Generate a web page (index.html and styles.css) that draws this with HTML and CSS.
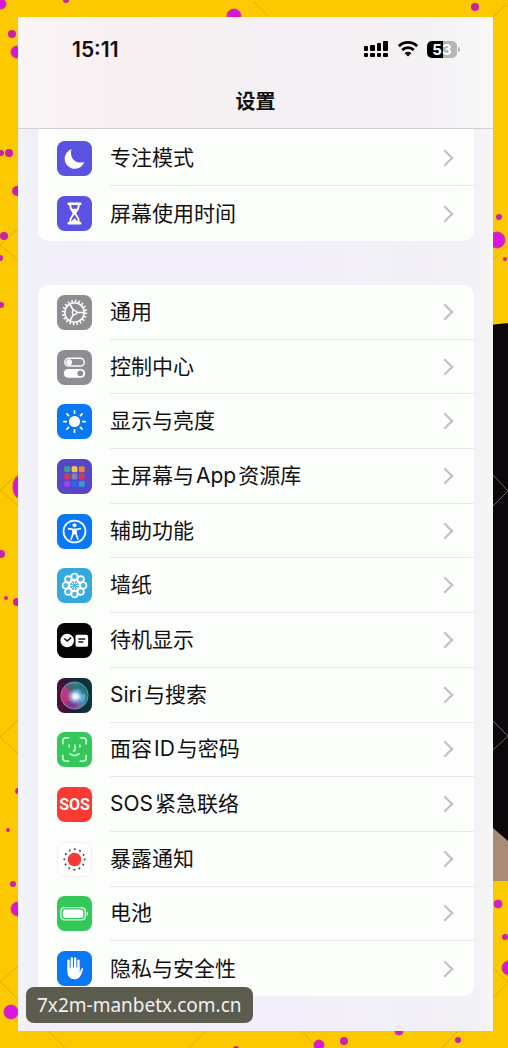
FILE: index.html
```html
<!DOCTYPE html>
<html lang="zh-CN">
<head>
    <meta charset="UTF-8">
    <meta name="viewport" content="width=device-width, initial-scale=1">
    <title>设置</title>
    <link rel="stylesheet" href="styles.css">
</head>
<body>

    <!-- paint splashes behind the phone -->
    <svg class="backdrop" viewBox="0 0 508 1048" preserveAspectRatio="none" aria-hidden="true">
        <g fill="none" stroke="#e0ae00">
            <path d="M0 245l18-16M0 245l18 15M0 490l18-16M0 490l18 16M0 737l18-17M0 737l18 17M0 982l18-16M0 982l18 17"/>
            <path d="M254 2l14 14M493 17l15-14M493 260l15-15M493 968l15 14-15 16M48 1031l17 17M206 1031l-17 17M302 1031l16 17M458 1031l-16 17"/>
        </g>
        <g fill="#d916dc" stroke="#c93a95">
            <circle cx="1" cy="4" r="5"/>
            <circle cx="17" cy="52" r="6"/>
            <circle cx="234" cy="16" r="7"/>
            <circle cx="497" cy="240" r="8"/>
            <ellipse cx="19" cy="487" rx="6" ry="11"/>
            <circle cx="18" cy="909" r="7"/>
            <circle cx="11" cy="1012" r="7"/>
            <circle cx="498" cy="904" r="4"/>
            <circle cx="509" cy="968" r="7"/>
            <circle cx="399" cy="1031" r="4"/>
            <circle cx="319" cy="1045" r="5"/>
        </g>
        <g fill="#c822a8">
            <circle cx="66" cy="0" r="3"/>
            <circle cx="12" cy="34" r="4"/>
            <circle cx="475" cy="7" r="4"/>
            <circle cx="1" cy="153" r="3"/>
            <circle cx="9" cy="153" r="4"/>
            <circle cx="17" cy="191" r="5"/>
            <circle cx="4" cy="236" r="4"/>
            <circle cx="0" cy="258" r="3"/>
            <circle cx="1" cy="305" r="3"/>
            <circle cx="1" cy="554" r="4"/>
            <circle cx="6" cy="598" r="2"/>
            <circle cx="17" cy="602" r="4"/>
            <circle cx="18" cy="791" r="3"/>
            <circle cx="8" cy="830" r="2"/>
            <circle cx="13" cy="884" r="3"/>
            <circle cx="499" cy="217" r="3"/>
            <circle cx="505" cy="259" r="2"/>
            <circle cx="505" cy="937" r="3"/>
            <circle cx="458" cy="1040" r="3"/>
            <circle cx="344" cy="1041" r="4"/>
            <circle cx="236" cy="1049" r="3"/>
        </g>
        <path d="M480 326l28-3v558h-28z" fill="#0c070b"/>
        <path d="M480 820l13 8 15 13v40h-28z" fill="#a98b76"/>
        <path d="M493 475l15 16-15 15M493 721l15 15-15 14" fill="none" stroke="#665f63"/>
    </svg>

    <main class="phone">
        <header class="top">
            <div class="status">
                <span class="time">15:11</span>
                <div class="status_icons">
                    <svg width="26" height="18" viewBox="0 0 26 18" aria-label="信号">
                        <rect x="1" y="6" width="4" height="5" rx="1"/>
                        <rect x="7" y="5" width="5" height="6" rx="1"/>
                        <rect x="14" y="3" width="4" height="8" rx="1"/>
                        <rect x="20" y="1" width="5" height="10" rx="1"/>
                        <rect x="1" y="13" width="4" height="4" rx="1"/>
                        <rect x="7" y="13" width="5" height="4" rx="1"/>
                        <rect x="14" y="13" width="4" height="4" rx="1"/>
                        <rect x="20" y="13" width="5" height="4" rx="1"/>
                    </svg>
                    <svg width="22" height="18" viewBox="0 0 22 18" aria-label="无线网络">
                        <path d="M1.800 6.200a13.200 13.200 0 0 1 18.400 0M5.200 10a8.300 8.300 0 0 1 11.600 0" fill="none" stroke="#000" stroke-width="2.700"/>
                        <path d="M11 16.500l-3.300-3.400a4.700 4.700 0 0 1 6.600 0z"/>
                    </svg>
                    <div class="battery"><span>5</span><span>3</span></div>
                </div>
            </div>
            <h1>设置</h1>
        </header>

        <nav class="list list_cut">
            <a class="row" href="#focus">
                <svg class="icon" viewBox="0 0 36 36">
                    <rect width="36" height="36" rx="8" fill="#5a52e0"/>
                    <path d="M15 8.500A10.300 10.300 0 1 0 28 21.500C20 24.500 12 17.500 15 8.500z" fill="#fff"/>
                </svg>
                <span class="label"><span>专注模式</span></span>
            </a>
            <a class="row" href="#screentime">
                <svg class="icon" viewBox="0 0 36 36">
                    <rect width="36" height="36" rx="8" fill="#5a52e0"/>
                    <path d="M12 8h12M12 28h12" stroke="#fff" stroke-width="2.500" stroke-linecap="round"/>
                    <path d="M13.500 9c0 5 2 6.500 4 9-2 2.500-4 4-4 9M22.500 9c0 5-2 6.500-4 9 2 2.500 4 4 4 9" fill="none" stroke="#fff" stroke-width="2"/>
                    <path d="M14.500 13h7L18 17.500zM14 27l4-4 4 4z" fill="#fff"/>
                </svg>
                <span class="label"><span>屏幕使用时间</span></span>
            </a>
        </nav>

        <nav class="list list_main">
            <a class="row" href="#general">
                <svg class="icon" viewBox="0 0 36 36">
                    <rect width="36" height="36" rx="8" fill="#8e8e92"/>
                    <g fill="none" stroke="#fff">
                        <circle cx="18" cy="18" r="11.800" stroke-width="2.400" stroke-dasharray="1.600 2.107"/>
                        <circle cx="18" cy="18" r="10" stroke-width="1.700"/>
                        <circle cx="18" cy="18" r="2.200" stroke-width="1.300"/>
                        <path d="M20 18h8M17 16l-4-7M17 20l-4 7" stroke-width="1.600"/>
                    </g>
                </svg>
                <span class="label"><span>通用</span></span>
            </a>
            <a class="row" href="#control">
                <svg class="icon" viewBox="0 0 36 36">
                    <rect width="36" height="36" rx="8" fill="#8e8e92"/>
                    <rect x="8" y="8.500" width="20" height="8" rx="4" fill="none" stroke="#fff" stroke-width="1.500"/>
                    <circle cx="12.500" cy="12.500" r="3" fill="#fff"/>
                    <rect x="7" y="19.500" width="22" height="9" rx="4.500" fill="#fff"/>
                    <circle cx="24" cy="24" r="3" fill="#8e8e92"/>
                </svg>
                <span class="label"><span>控制中心</span></span>
            </a>
            <a class="row" href="#display">
                <svg class="icon" viewBox="0 0 36 36">
                    <rect width="36" height="36" rx="8" fill="#0a78f5"/>
                    <circle cx="18" cy="18" r="5.700" fill="#fff"/>
                    <path d="M18 7v2.500M18 26.500v2.500M7 18h2.500M26.500 18h2.500M10.200 10.200l1.700 1.700M24.100 24.100l1.700 1.700M10.200 25.800l1.700-1.700M24.100 11.900l1.700-1.700" stroke="#fff" stroke-width="1.800" stroke-linecap="round"/>
                </svg>
                <span class="label"><span>显示与亮度</span></span>
            </a>
            <a class="row" href="#home">
                <svg class="icon" viewBox="0 0 36 36">
                    <rect width="36" height="36" rx="8" fill="#5548c8"/>
                    <rect x="7.500" y="7.500" width="6" height="6" rx="1.500" fill="#35a67c"/>
                    <rect x="15" y="7.500" width="6" height="6" rx="1.500" fill="#f5c64c"/>
                    <rect x="22.500" y="7.500" width="6" height="6" rx="1.500" fill="#e68a35"/>
                    <rect x="7.500" y="15" width="6" height="6" rx="1.500" fill="#d83858"/>
                    <rect x="15" y="15" width="6" height="6" rx="1.500" fill="#8c7fb0"/>
                    <rect x="22.500" y="15" width="6" height="6" rx="1.500" fill="#d83858"/>
                    <rect x="7.500" y="22.500" width="6" height="6" rx="1.500" fill="#a344dc"/>
                    <rect x="15" y="22.500" width="6" height="6" rx="1.500" fill="#2468e8"/>
                    <rect x="22.500" y="22.500" width="6" height="6" rx="1.500" fill="#339fc4"/>
                </svg>
                <span class="label"><span>主屏幕与<span class="latin">App</span>资源库</span></span>
            </a>
            <a class="row" href="#accessibility">
                <svg class="icon" viewBox="0 0 36 36">
                    <rect width="36" height="36" rx="8" fill="#0a78f5"/>
                    <circle cx="18" cy="18" r="11.300" fill="none" stroke="#fff" stroke-width="1.800"/>
                    <circle cx="18" cy="11.500" r="2" fill="#fff"/>
                    <path d="M12 15l4.500 1v4l-2 6M24 15l-4.500 1v4l2 6" fill="none" stroke="#fff" stroke-width="1.700" stroke-linecap="round" stroke-linejoin="round"/>
                    <path d="M16 15h4v6h-4z" fill="#fff"/>
                </svg>
                <span class="label"><span>辅助功能</span></span>
            </a>
            <a class="row" href="#wallpaper">
                <svg class="icon" viewBox="0 0 36 36">
                    <rect width="36" height="36" rx="8" fill="#35a9de"/>
                    <g fill="#50b5e3" stroke="#fff" stroke-width="1.700">
                        <circle cx="18" cy="9" r="3.300"/>
                        <circle cx="24.400" cy="11.600" r="3.300"/>
                        <circle cx="27" cy="18" r="3.300"/>
                        <circle cx="24.400" cy="24.400" r="3.300"/>
                        <circle cx="18" cy="27" r="3.300"/>
                        <circle cx="11.600" cy="24.400" r="3.300"/>
                        <circle cx="9" cy="18" r="3.300"/>
                        <circle cx="11.600" cy="11.600" r="3.300"/>
                        <circle cx="18" cy="18" r="5.500"/>
                        <path d="M18 12v12M12 18h12M14 14l8 8M14 22l8-8" stroke-width="1"/>
                    </g>
                    <circle cx="18" cy="18" r="1.500" fill="#35a9de"/>
                </svg>
                <span class="label"><span>墙纸</span></span>
            </a>
            <a class="row" href="#standby">
                <svg class="icon" viewBox="0 0 36 36">
                    <rect width="36" height="36" rx="8" fill="#050505"/>
                    <circle cx="10.500" cy="18" r="7" fill="#fff"/>
                    <path d="M7.500 16l3 2.500 4-3.500" fill="none" stroke="#111" stroke-width="1.500"/>
                    <rect x="19" y="12" width="13" height="12.500" rx="2" fill="#fff"/>
                    <path d="M22 16.500h7M22 19.500h5" stroke="#111" stroke-width="1.400"/>
                </svg>
                <span class="label"><span>待机显示</span></span>
            </a>
            <a class="row" href="#siri">
                <svg class="icon" viewBox="0 0 36 36">
                    <defs>
                        <linearGradient id="siriBase" x1="0" y1="0.500" x2="1" y2="0.400">
                            <stop offset="0" stop-color="#5b0a38"/>
                            <stop offset="0.450" stop-color="#17243e"/>
                            <stop offset="1" stop-color="#073a3a"/>
                        </linearGradient>
                        <linearGradient id="siriOrb" x1="0" y1="0.700" x2="1" y2="0.300">
                            <stop offset="0" stop-color="#d0246f"/>
                            <stop offset="0.400" stop-color="#a8488f"/>
                            <stop offset="0.650" stop-color="#3a8eae"/>
                            <stop offset="1" stop-color="#0d7260"/>
                        </linearGradient>
                        <radialGradient id="siriGlow">
                            <stop offset="0" stop-color="#fff"/>
                            <stop offset="0.300" stop-color="#e5f3ff" stop-opacity="0.900"/>
                            <stop offset="1" stop-color="#6fa6ed" stop-opacity="0"/>
                        </radialGradient>
                    </defs>
                    <rect width="36" height="36" rx="8" fill="url(#siriBase)"/>
                    <circle cx="18" cy="18" r="14" fill="url(#siriOrb)" stroke="#78909f"/>
                    <path d="M9 9c6-5 14-3 19 2-7-1-10 1-12 5-3-2-5-4-7-7z" fill="#0d6952" opacity="0.500"/>
                    <path d="M8 24c5 1 10-2 12-5 3 4 2 8-2 12-4 0-8-3-10-7z" fill="#3f3a9b" opacity="0.500"/>
                    <path d="M18 19l11-3c1 4 0 7-2 9z" fill="#65c7e4" opacity="0.600"/>
                    <circle cx="19" cy="19" r="9" fill="url(#siriGlow)"/>
                </svg>
                <span class="label"><span><span class="latin latin_first">Siri</span>与搜索</span></span>
            </a>
            <a class="row" href="#faceid">
                <svg class="icon" viewBox="0 0 36 36">
                    <rect width="36" height="36" rx="8" fill="#34c759"/>
                    <g fill="none" stroke="#c4f5cf" stroke-width="1.800" stroke-linecap="round">
                        <path d="M6 12V9a3 3 0 0 1 3-3h3M24 6h3a3 3 0 0 1 3 3v3M30 24v3a3 3 0 0 1-3 3h-3M12 30H9a3 3 0 0 1-3-3v-3"/>
                        <path d="M12.500 13.500v2M23.500 13.500v2M18.500 13.500v5q0 1-1.500 1M13.500 22.500q4.500 3.500 9 0"/>
                    </g>
                </svg>
                <span class="label"><span>面容<span class="latin">ID</span>与密码</span></span>
            </a>
            <a class="row" href="#sos">
                <span class="icon icon_sos">SOS</span>
                <span class="label"><span><span class="latin latin_first">SOS</span>紧急联络</span></span>
            </a>
            <a class="row" href="#exposure">
                <svg class="icon" viewBox="0 0 36 36">
                    <rect x="0.500" y="0.500" width="35" height="35" rx="8" fill="#fff" stroke="#f6ecee"/>
                    <circle cx="18" cy="18" r="7" fill="#f53a35"/>
                    <circle cx="18" cy="18" r="10.500" fill="none" stroke="#5d3b40" stroke-width="2" stroke-linecap="round" stroke-dasharray="0.100 5.398"/>
                </svg>
                <span class="label"><span>暴露通知</span></span>
            </a>
            <a class="row" href="#battery">
                <svg class="icon" viewBox="0 0 36 36">
                    <rect width="36" height="36" rx="8" fill="#34c759"/>
                    <rect x="4" y="12" width="25" height="12.500" rx="3.500" fill="none" stroke="#d9f7df" stroke-width="1.400"/>
                    <rect x="6" y="14" width="21" height="8.500" rx="2" fill="#fff"/>
                    <path d="M30.500 16c2 .7 2 3.800 0 4.500z" fill="#d9f7df"/>
                </svg>
                <span class="label"><span>电池</span></span>
            </a>
            <a class="row" href="#privacy">
                <svg class="icon" viewBox="0 0 36 36">
                    <rect width="36" height="36" rx="8" fill="#0a78f5"/>
                    <path d="M11.800 19v-9M15.200 18V7.500M18.700 18V7.500M22.100 19v-9" stroke="#fff" stroke-width="2.400" stroke-linecap="round"/>
                    <path d="M10.600 17h12.700v5l1.700-3.500c.8-1.500 2.200-1 1.700.5-1.700 5.500-3.200 10-8.400 10-5 0-7.700-3.500-7.700-8z" fill="#fff"/>
                </svg>
                <span class="label"><span>隐私与安全性</span></span>
            </a>
        </nav>
    </main>

    <div class="watermark">7x2m-manbetx.com.cn</div>

</body>
</html>
```

FILE: styles.css
```css
* {
    margin: 0;
    padding: 0;
    box-sizing: border-box;
}
body {
    position: relative;
    min-height: 100vh;
    display: flex;
    padding: 17px 15px 17px 18px;
    background-color: #fcc800;
    color: #111;
    font-family: Inter, "Noto Sans CJK SC", sans-serif;
    font-size: 21px;
}
.backdrop {
    position: absolute;
    top: 0;
    left: 0;
    width: 100%;
    height: 100%;
}

.phone {
    position: relative;
    flex: 1;
    display: flex;
    flex-direction: column;
    padding-bottom: 35px;
    background: linear-gradient(90deg, #f5f1fa, #eef2f6 12px, #f2eefa 20px, #f2effa 60%, #f2f1f5 96%, #f6f6f7);
}

/* header */
.top {
    height: 112px;
    padding-top: 18px;
    border-bottom: 1px solid #d3cfd3;
    background: linear-gradient(90deg, #faf5f8, #f9f0f2 20%, #f4f0f3 50%, #f4f1f5 85%, #f8f8f9);
}
.status {
    display: flex;
    align-items: center;
    justify-content: space-between;
    height: 28px;
    padding: 0 36px 0 54px;
}
.time {
    font-size: 21px;
    font-weight: 600;
}
.status_icons {
    display: flex;
    align-items: center;
    gap: 8px;
}
.battery {
    position: relative;
    display: flex;
    width: 30px;
    height: 17px;
    border-radius: 5px;
    background: linear-gradient(90deg, #000 53%, #b5b4b7 53%);
    color: #fff;
    font-size: 15px;
    font-weight: 700;
    line-height: 17px;
    justify-content: center;
}
.battery::after {
    content: "";
    position: absolute;
    top: 6px;
    right: -3px;
    width: 2px;
    height: 5px;
    border-radius: 0 2px 2px 0;
    background-color: #b5b4b7;
}
.top h1 {
    margin-top: 24px;
    font-size: 20px;
    font-weight: 700;
    line-height: 30px;
    text-align: center;
}

/* setting groups */
.list {
    display: flex;
    flex-direction: column;
    margin: 0 19px 0 20px;
    border-radius: 10px;
    background-color: #fcfefc;
}
.list_cut {
    padding-top: 2px;
    border-radius: 0 0 10px 10px;
}
.list_main {
    flex: 1;
    margin-top: 44px;
}
.row {
    flex: 1;
    display: flex;
    align-items: center;
    min-height: 54px;
    padding-left: 19px;
    color: inherit;
    text-decoration: none;
}
.list_cut .row {
    min-height: 55px;
}
.icon {
    flex: none;
    width: 35px;
    height: 35px;
    margin-right: 18px;
}
.icon_sos {
    border-radius: 8px;
    background-color: #fb3b33;
    color: #fff;
    font-family: "Liberation Sans Narrow", Roboto, sans-serif;
    font-size: 16px;
    font-weight: 700;
    line-height: 36px;
    text-align: center;
}
.label {
    flex: 1;
    align-self: stretch;
    display: flex;
    align-items: center;
    border-bottom: 1px solid #efe6ed;
    line-height: 30px;
    white-space: nowrap;
}
.row:last-child .label {
    border-bottom: none;
}
.latin {
    margin: 0 2px;
}
.latin_first {
    margin-left: 0;
}
.label::after {
    content: "";
    width: 10px;
    height: 10px;
    margin-left: auto;
    margin-right: 23px;
    border-top: 2px solid #c2bfc3;
    border-right: 2px solid #c2bfc3;
    transform: rotate(45deg);
}

.watermark {
    position: absolute;
    left: 26px;
    bottom: 25px;
    padding: 0 11px;
    border-radius: 8px;
    background-color: #5b5c4e;
    color: #f3eff3;
    font-family: "Noto Sans", sans-serif;
    font-size: 19px;
    line-height: 36px;
}
```
